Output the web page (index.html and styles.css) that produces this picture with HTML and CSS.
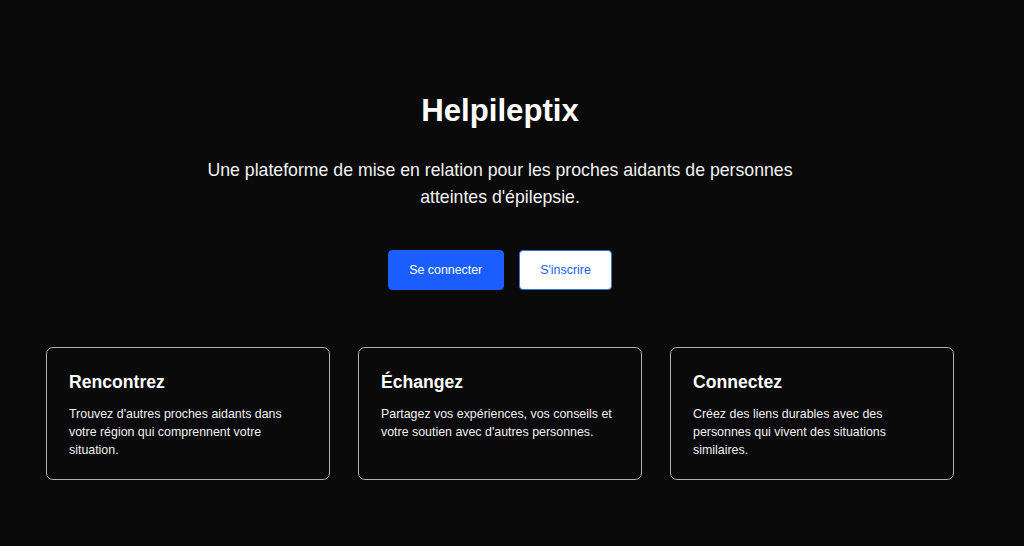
FILE: index.html
```html
<!DOCTYPE html>
<html lang="fr">
<head>
<meta charset="utf-8">
<title>Helpileptix</title>
<link rel="stylesheet" href="styles.css">
</head>
<body>
<main class="page">
  <section class="hero">
    <h1 class="hero-title">Helpileptix</h1>
    <p class="hero-text">Une plateforme de mise en relation pour les proches aidants de personnes atteintes d'épilepsie.</p>
    <div class="hero-actions">
      <a class="btn btn-primary" href="#">Se connecter</a>
      <a class="btn btn-outline" href="#">S'inscrire</a>
    </div>
  </section>
  <section class="features">
    <article class="card">
      <h2 class="card-title">Rencontrez</h2>
      <p class="card-text">Trouvez d'autres proches aidants dans votre région qui comprennent votre situation.</p>
    </article>
    <article class="card">
      <h2 class="card-title">Échangez</h2>
      <p class="card-text">Partagez vos expériences, vos conseils et votre soutien avec d'autres personnes.</p>
    </article>
    <article class="card">
      <h2 class="card-title">Connectez</h2>
      <p class="card-text">Créez des liens durables avec des personnes qui vivent des situations similaires.</p>
    </article>
  </section>
</main>
</body>
</html>
```

FILE: styles.css
```css
* { box-sizing: border-box; }
html, body {
  margin: 0;
  padding: 0;
  background: #0a0a0a;
  color: #ffffff;
  font-family: "Liberation Sans", Arial, sans-serif;
}
.page {
  width: 1000px;
  padding: 92px 46px 40px;
}
.hero {
  display: flex;
  flex-direction: column;
  align-items: center;
  text-align: center;
}
.hero-title {
  margin: 0;
  font-size: 31.2px;
  line-height: 37px;
  font-weight: 700;
}
.hero-text {
  margin: 28px 0 0;
  max-width: 600px;
  font-size: 17.7px;
  line-height: 27px;
  color: #f2f2f2;
}
.hero-actions {
  display: flex;
  gap: 15px;
  margin-top: 39px;
}
.btn {
  display: inline-block;
  height: 40px;
  padding: 0 20.5px;
  border-radius: 4px;
  font-size: 12.4px;
  line-height: 38px;
  text-decoration: none;
  border: 1px solid transparent;
}
.btn-primary {
  background: #1a5eff;
  color: #ffffff;
  border-color: #1a5eff;
}
.btn-outline {
  background: #ffffff;
  color: #1a5eff;
  border-color: #3b6fe0;
}
.features {
  display: grid;
  grid-template-columns: repeat(3, 1fr);
  gap: 28px;
  margin-top: 57px;
}
.card {
  border: 1px solid #b0b0b0;
  border-radius: 7px;
  padding: 24px 22px 20px;
  min-height: 133px;
}
.card-title {
  margin: 0;
  font-size: 17.6px;
  line-height: 21px;
  font-weight: 700;
}
.card-text {
  margin: 12px 0 0;
  font-size: 12.4px;
  line-height: 18px;
  color: #f0f0f0;
}
```
